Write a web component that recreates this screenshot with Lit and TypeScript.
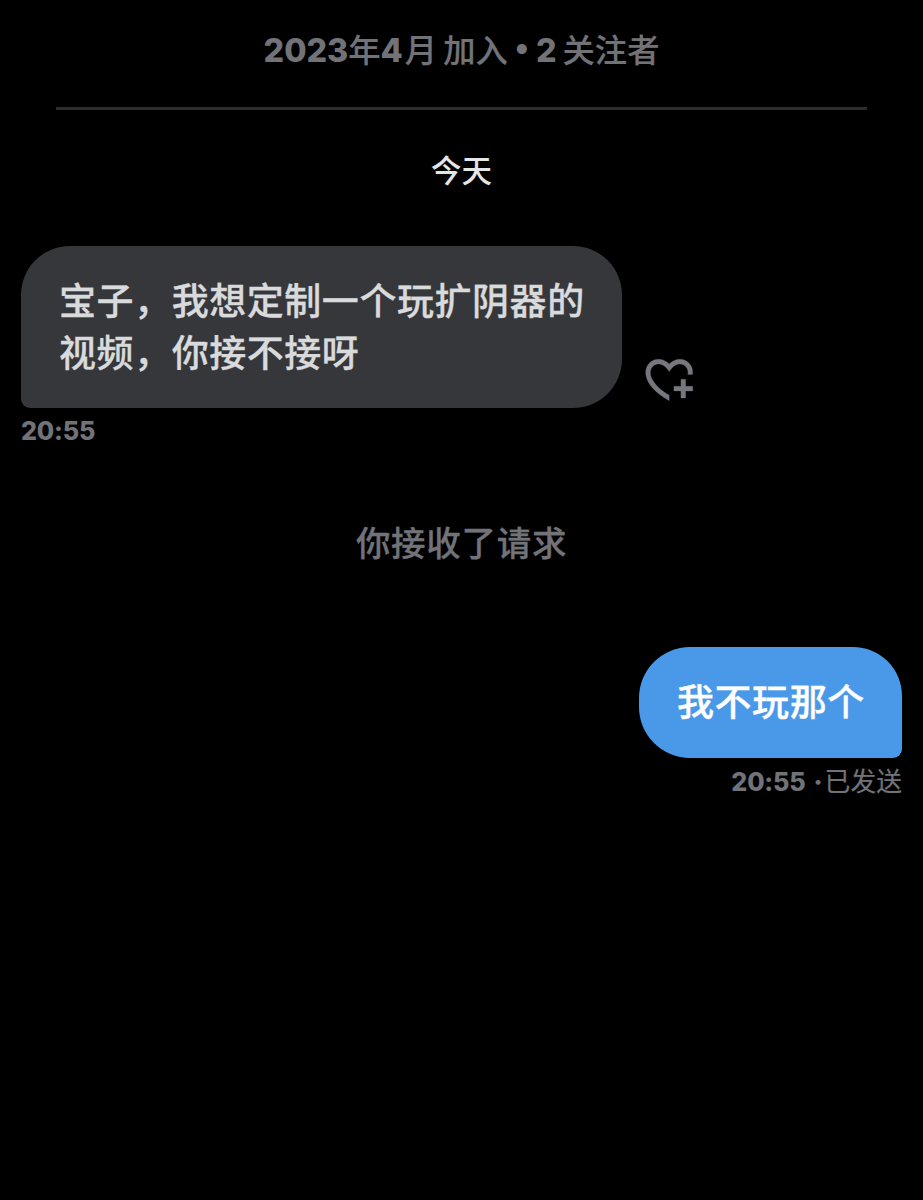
import { LitElement, html, css } from "lit";
import { customElement } from "lit/decorators.js";

@customElement("app-root")
export class AppRoot extends LitElement {
  static styles = css`
    :host {
      display: flex;
      flex-direction: column;
      box-sizing: border-box;
      height: 1200px;
      overflow: hidden;
      background: #000;
      color: #717378;
      font-family: "Noto Sans CJK SC", sans-serif;
      font-weight: 500;
      white-space: nowrap;
    }
    .num {
      font-family: Inter, "Noto Sans CJK SC", sans-serif;
      font-weight: 800;
    }
    .profile {
      display: flex;
      justify-content: center;
      align-items: baseline;
      margin: 0 56px;
      height: 107px;
      line-height: 96px;
      font-size: 32.3px;
      border-bottom: 3px solid #2a2c2f;
      -webkit-text-stroke: 0.2px currentColor;
    }
    .profile .num { -webkit-text-stroke: 0; }
    .month { margin-left: 2px; }
    .gap { margin-left: 6px; }
    .bullet {
      align-self: flex-start;
      margin: 0 7px;
      line-height: 94px;
    }
    .tight { margin-left: 6px; }
    .day {
      margin-top: 36px;
      line-height: 46px;
      text-align: center;
      font-size: 30.5px;
      color: #e4e5e6;
    }
    .incoming {
      display: flex;
      align-items: flex-end;
      gap: 19px;
      margin: 54px 0 0 21px;
    }
    .bubble {
      box-sizing: border-box;
      font-size: 37px;
      letter-spacing: 0.55px;
      line-height: 52px;
      padding: 27px 34px 27px 38px;
      -webkit-text-stroke: 0.3px currentColor;
    }
    .them {
      width: 601px;
      height: 161.5px;
      background: #36373b;
      color: #d9dadb;
      border-radius: 49px 49px 49px 9px;
    }
    .me {
      width: 263px;
      height: 110.5px;
      background: #4a99e9;
      color: #fff;
      border-radius: 51px 49px 9px 51px;
    }
    .react {
      display: block;
      width: 56.4px;
      height: 56.4px;
      fill: #77787d;
      stroke: #77787d;
      stroke-width: 0.12;
    }
    .time {
      margin: 4.5px 21px 0;
      height: 40px;
      line-height: 38px;
      font-size: 25.2px;
      letter-spacing: -0.2px;
    }
    .note {
      margin-top: 64px;
      line-height: 50px;
      text-align: center;
      font-size: 34.5px;
      letter-spacing: 0.7px;
      -webkit-text-stroke: 0.3px currentColor;
    }
    .outgoing {
      display: flex;
      flex-direction: column;
      align-items: flex-end;
      margin-top: 81px;
    }
    .outgoing .bubble { margin-right: 21px; }
    .status {
      display: flex;
      align-items: baseline;
      line-height: 35px;
      font-size: 25.8px;
      font-weight: 400;
      letter-spacing: 0;
      -webkit-text-stroke: 0.2px currentColor;
    }
    .status .clock {
      font-size: 25.2px;
      letter-spacing: -0.2px;
      -webkit-text-stroke: 0;
    }
    .dot { margin: 0 2px 0 8px; }
  `;

  render() {
    return html`
      <header class="profile">
        <span class="num">2023</span><span>年</span><span class="num">4</span><span class="month">月</span>
        <span class="gap">加入</span><span class="num bullet">•</span><span class="num">2</span>
        <span class="tight">关注者</span>
      </header>
      <div class="day">今天</div>
      <div class="incoming">
        <div class="bubble them">宝子，我想定制一个玩扩阴器的<br />视频，你接不接呀</div>
        <svg class="react" viewBox="0 0 24 24">
          <path d="M17 12v3h-2.998v2h3v3h2v-3h3v-2h-3.001v-3H17zm-5 6.839c-3.871-2.34-6.053-4.639-7.127-6.609-1.112-2.04-1.031-3.7-.479-4.82.561-1.13 1.667-1.84 2.91-1.91 1.222-.06 2.68.51 3.892 2.16l.806 1.09.805-1.09c1.211-1.65 2.668-2.22 3.89-2.16 1.242.07 2.347.78 2.908 1.91.334.677.49 1.554.321 2.59h2.011c.153-1.283-.039-2.469-.539-3.48-.887-1.79-2.647-2.91-4.601-3.01-1.65-.09-3.367.56-4.796 2.01-1.43-1.45-3.147-2.1-4.798-2.01-1.954.1-3.714 1.22-4.601 3.01-.896 1.81-.846 4.17.514 6.67 1.353 2.48 4.003 5.12 8.382 7.67l.502.299v-2.32z" />
        </svg>
      </div>
      <div class="time num">20:55</div>
      <div class="note">你接收了请求</div>
      <div class="outgoing">
        <div class="bubble me">我不玩那个</div>
        <div class="time status">
          <span class="num clock">20:55</span><span class="num dot">·</span><span>已发送</span>
        </div>
      </div>
    `;
  }
}
